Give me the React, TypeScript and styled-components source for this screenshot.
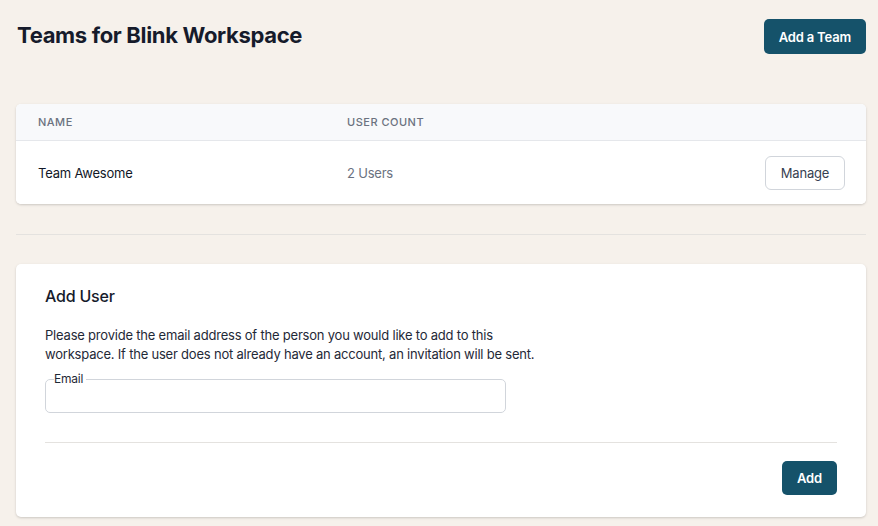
import * as React from "react";
import styled, { createGlobalStyle } from "styled-components";

const GlobalStyle = createGlobalStyle`
  html, body {
    margin: 0;
    padding: 0;
    background: #f6f1eb;
  }
  body {
    font-family: Inter, "Noto Sans", sans-serif;
    letter-spacing: -0.013em;
    color: #111827;
  }
  * {
    box-sizing: border-box;
  }
`;

const Page = styled.div`
  padding: 19px 12px 8px 16px;
  display: flex;
  flex-direction: column;
`;

const Header = styled.div`
  display: flex;
  justify-content: space-between;
  align-items: flex-start;
  margin-bottom: 50px;
`;

const Title = styled.h1`
  margin: 0;
  padding-left: 1px;
  font-size: 22px;
  line-height: 32px;
  font-weight: 700;
  letter-spacing: -0.015em;
  color: #161b2b;
`;

const PrimaryButton = styled.button`
  height: 35px;
  padding: 0 15px;
  border: none;
  border-radius: 5px;
  background: #15526a;
  color: #ffffff;
  font-family: Inter, sans-serif;
  font-size: 13px;
  font-weight: 600;
  letter-spacing: -0.013em;
  cursor: pointer;
`;

const Card = styled.div`
  background: #ffffff;
  border-radius: 5px;
  box-shadow: 0 1px 3px rgba(0, 0, 0, 0.12), 0 1px 2px rgba(0, 0, 0, 0.06);
  overflow: hidden;
`;

const TableRow = styled.div<{ $head?: boolean }>`
  display: grid;
  grid-template-columns: 309px 1fr auto;
  align-items: center;
  padding: 0 21px 0 22px;
  height: ${(p) => (p.$head ? "37px" : "63px")};
  background: ${(p) => (p.$head ? "#f8f9fb" : "#ffffff")};
  border-bottom: ${(p) => (p.$head ? "1px solid #e5e7eb" : "none")};
`;

const HeadCell = styled.div`
  font-size: 11px;
  font-weight: 500;
  letter-spacing: 0.5px;
  text-transform: uppercase;
  color: #6b7280;
`;

const Cell = styled.div<{ $muted?: boolean }>`
  font-size: 13px;
  color: ${(p) => (p.$muted ? "#6b7280" : "#111827")};
`;

const OutlineButton = styled.button`
  height: 34px;
  width: 80px;
  border: 1px solid #d1d5db;
  border-radius: 6px;
  background: #ffffff;
  color: #374151;
  font-family: Inter, sans-serif;
  font-size: 13px;
  letter-spacing: -0.013em;
  cursor: pointer;
`;

const Divider = styled.hr<{ $gap: string }>`
  border: none;
  border-top: 1px solid #e4e2df;
  margin: ${(p) => p.$gap};
`;

const FormCard = styled(Card)`
  padding: 22px 29px 22px 29px;
`;

const FormTitle = styled.h2`
  margin: 0 0 20px;
  font-size: 16px;
  font-weight: 500;
  color: #161b2b;
`;

const Help = styled.p`
  margin: 0 0 10px;
  max-width: 500px;
  font-size: 13px;
  line-height: 19px;
  color: #1f2937;
`;

const Field = styled.fieldset`
  margin: 0;
  width: 461px;
  height: 39px;
  padding: 0 8px;
  border: 1px solid #d1d5db;
  border-radius: 5px;
`;

const Legend = styled.legend`
  padding: 0 3px 0 0;
  font-size: 12px;
  color: #1f2937;
  line-height: 10px;
`;

const Input = styled.input`
  width: 100%;
  height: 28px;
  border: none;
  outline: none;
  background: transparent;
  font-family: Inter, sans-serif;
  font-size: 13px;
`;

const Footer = styled.div`
  display: flex;
  justify-content: flex-end;
`;

const AddButton = styled(PrimaryButton)`
  height: 34px;
  padding: 0 15px;
`;

export default function App() {
  return (
    <>
      <GlobalStyle />
      <Page>
        <Header>
          <Title>Teams for Blink Workspace</Title>
          <PrimaryButton>Add a Team</PrimaryButton>
        </Header>
        <Card>
          <TableRow $head>
            <HeadCell>Name</HeadCell>
            <HeadCell>User Count</HeadCell>
            <span />
          </TableRow>
          <TableRow>
            <Cell>Team Awesome</Cell>
            <Cell $muted>2 Users</Cell>
            <OutlineButton>Manage</OutlineButton>
          </TableRow>
        </Card>
        <Divider $gap="30px 0 29px" />
        <FormCard>
          <FormTitle>Add User</FormTitle>
          <Help>
            Please provide the email address of the person you would like to add
            to this workspace. If the user does not already have an account, an
            invitation will be sent.
          </Help>
          <Field>
            <Legend>Email</Legend>
            <Input type="email" />
          </Field>
          <Divider $gap="29px 0 18px" />
          <Footer>
            <AddButton>Add</AddButton>
          </Footer>
        </FormCard>
      </Page>
    </>
  );
}
